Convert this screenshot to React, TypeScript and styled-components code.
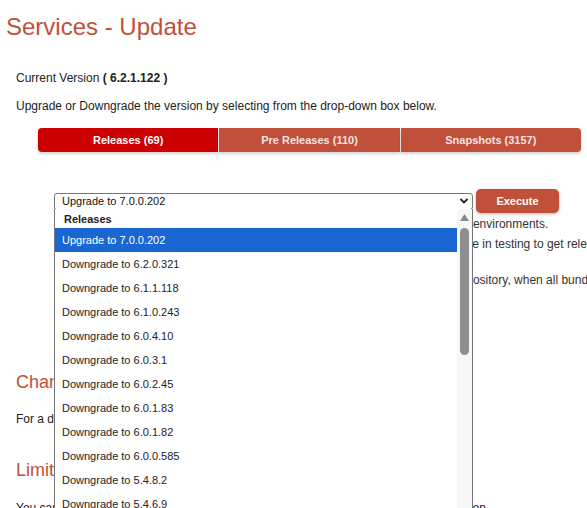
import React from 'react';
import styled, { createGlobalStyle } from 'styled-components';

const GlobalStyle = createGlobalStyle`
  * { box-sizing: border-box; }
  html, body {
    margin: 0;
    padding: 0;
    background: #ffffff;
    overflow: hidden;
  }
  body {
    font-family: "Liberation Sans", Arial, sans-serif;
    font-size: 12px;
    color: #222222;
  }
`;

const tabs = [
  { label: 'Releases (69)', active: true },
  { label: 'Pre Releases (110)', active: false },
  { label: 'Snapshots (3157)', active: false },
];

const versions = [
  'Upgrade to 7.0.0.202',
  'Downgrade to 6.2.0.321',
  'Downgrade to 6.1.1.118',
  'Downgrade to 6.1.0.243',
  'Downgrade to 6.0.4.10',
  'Downgrade to 6.0.3.1',
  'Downgrade to 6.0.2.45',
  'Downgrade to 6.0.1.83',
  'Downgrade to 6.0.1.82',
  'Downgrade to 6.0.0.585',
  'Downgrade to 5.4.8.2',
  'Downgrade to 5.4.6.9',
  'Downgrade to 5.4.6.3',
];

export default function App() {
  const selected = 0;

  return (
    <Page>
      <GlobalStyle />
      <Title>Services - Update</Title>
      <Content>
        <Text $top={30}>
          Current Version <b>( 6.2.1.122 )</b>
        </Text>
        <Text $top={14}>Upgrade or Downgrade the version by selecting from the drop-down box below.</Text>

        <Tabs>
          {tabs.map((t) => (
            <Tab key={t.label} $active={t.active}>
              {t.label}
            </Tab>
          ))}
        </Tabs>

        <SelectRow>
          <SelectWrap>
            <SelectBox>
              <span>{versions[selected]}</span>
              <svg width="10" height="8" viewBox="0 0 10 8">
                <path d="M1.5 2 L5 5.5 L8.5 2" fill="none" stroke="#222" strokeWidth="1.8" />
              </svg>
            </SelectBox>
            <Dropdown>
              <OptionList>
                <GroupLabel>Releases</GroupLabel>
                {versions.map((v, i) => (
                  <Option key={v} $selected={i === selected}>
                    {v}
                  </Option>
                ))}
              </OptionList>
              <ScrollTrack>
                <svg width="15" height="14" viewBox="0 0 15 14">
                  <path d="M3 12 L7.5 5 L12 12 Z" fill="#8a8a8a" />
                </svg>
                <ScrollThumb />
              </ScrollTrack>
            </Dropdown>
          </SelectWrap>
          <ExecuteButton>Execute</ExecuteButton>
        </SelectRow>

        <Notes>
          <NoteLine>Releases: stable versions, thoroughly tested and suitable for use in production environments.</NoteLine>
          <NoteLine>
            Pre Releases: release candidates, available for all users who want to participate in testing to get releases early.
          </NoteLine>
          <NoteLine $top={16}>
            Snapshots: development builds, published automatically to public snapshot repository, when all bundles compile successfully.
          </NoteLine>
        </Notes>

        <SubTitle $top={81}>Changelog</SubTitle>
        <Text $top={19}>For a detailed list of changes, please refer to the changelog of each version.</Text>
        <SubTitle $top={33}>Limitations</SubTitle>
        <Text $top={20} $nowrap>
          You can only downgrade to versions released after the one used for the initial installation
        </Text>
      </Content>
    </Page>
  );
}

const Page = styled.div`
  width: 100%;
  height: 508px;
  overflow: hidden;
  padding: 0 6px;
`;

const Title = styled.h1`
  margin: 0;
  padding-top: 13px;
  font-size: 24px;
  line-height: 28px;
  font-weight: normal;
  color: #c0503a;
`;

const Content = styled.div`
  padding-left: 10px;
`;

const Text = styled.p<{ $top: number; $nowrap?: boolean }>`
  margin: ${(p) => p.$top}px 0 0;
  line-height: 14px;
  font-size: 12px;
  color: #222222;
  white-space: ${(p) => (p.$nowrap ? 'nowrap' : 'normal')};

  b {
    font-weight: bold;
  }
`;

const Tabs = styled.div`
  display: grid;
  grid-template-columns: repeat(3, 1fr);
  gap: 1px;
  width: 543px;
  margin: 15px 0 0 22px;
`;

const Tab = styled.div<{ $active: boolean }>`
  height: 24px;
  display: flex;
  align-items: center;
  justify-content: center;
  background: ${(p) => (p.$active ? '#cc0000' : '#c0503a')};
  color: ${(p) => (p.$active ? '#ffffff' : '#f6e4e0')};
  font-size: 11px;
  font-weight: bold;
  box-shadow: 0 2px 3px rgba(0, 0, 0, 0.18);

  &:first-child {
    border-radius: 4px 0 0 4px;
  }
  &:last-child {
    border-radius: 0 4px 4px 0;
  }
`;

const SelectRow = styled.div`
  display: flex;
  align-items: center;
  gap: 3px;
  height: 24px;
  margin: 37px 0 0 38px;
`;

const SelectWrap = styled.div`
  position: relative;
  width: 419px;
`;

const SelectBox = styled.div`
  height: 17px;
  display: flex;
  align-items: center;
  justify-content: space-between;
  padding: 0 3px 0 7px;
  border: 1px solid #767676;
  border-radius: 3px;
  background: #ffffff;
  font-size: 11px;
  color: #111111;
`;

const Dropdown = styled.div`
  position: absolute;
  left: 0;
  top: calc(100% - 0.5px);
  width: 100%;
  height: 320px;
  display: flex;
  background: #ffffff;
  border-left: 1px solid #767676;
  border-right: 1px solid #767676;
  z-index: 10;
  overflow: hidden;
`;

const OptionList = styled.div`
  flex: 1;
  display: flex;
  flex-direction: column;
`;

const GroupLabel = styled.div`
  height: 19px;
  line-height: 20px;
  padding-left: 9px;
  font-size: 11px;
  font-weight: bold;
  color: #222222;
`;

const Option = styled.div<{ $selected: boolean }>`
  height: 24px;
  flex-shrink: 0;
  line-height: 24px;
  padding-left: 7px;
  font-size: 11px;
  background: ${(p) => (p.$selected ? '#1a67d3' : 'transparent')};
  color: ${(p) => (p.$selected ? '#ffffff' : '#222222')};
`;

const ScrollTrack = styled.div`
  position: relative;
  width: 15px;
  background: #f7f7f7;
  svg {
    display: block;
    margin-top: 0;
  }
`;

const ScrollThumb = styled.div`
  position: absolute;
  left: 3px;
  top: 19px;
  width: 9px;
  height: 127px;
  border-radius: 5px;
  background: #8f8f8f;
`;

const ExecuteButton = styled.button`
  width: 83px;
  height: 24px;
  padding: 0;
  border: none;
  border-radius: 5px;
  background: #c0503a;
  color: #ffffff;
  font-family: "Liberation Sans", Arial, sans-serif;
  font-size: 11px;
  font-weight: bold;
  box-shadow: 0 1px 3px rgba(0, 0, 0, 0.3);
`;

const Notes = styled.div`
  margin: 1px 0 0 38px;
  white-space: nowrap;
`;

const NoteLine = styled.p<{ $top?: number }>`
  margin: ${(p) => p.$top ?? 0}px 0 0;
  line-height: 20px;
  font-size: 12px;
  color: #333333;
`;

const SubTitle = styled.h2<{ $top: number }>`
  margin: ${(p) => p.$top}px 0 0;
  font-size: 18px;
  line-height: 22px;
  font-weight: normal;
  color: #c0503a;
`;
